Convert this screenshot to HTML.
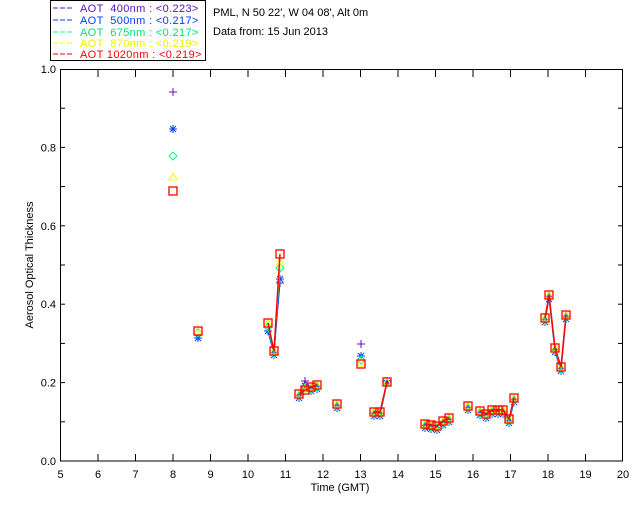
<!DOCTYPE html>
<html><head><meta charset="utf-8"><style>
html,body{margin:0;padding:0;background:#fff;width:640px;height:512px;overflow:hidden}
svg{display:block}
text{font-family:"Liberation Sans",sans-serif;font-size:11px}
</style></head><body>
<svg id="s" width="640" height="512" viewBox="0 0 640 512" xmlns="http://www.w3.org/2000/svg">
<rect x="50.5" y="0.5" width="155" height="60" fill="none" stroke="#000"/>
<g font-size="11" letter-spacing="0.35">
<line x1="53" y1="8" x2="73" y2="8" stroke="#6010c0" stroke-dasharray="5,2"/><text x="80" y="12" fill="#6010c0" xml:space="preserve">AOT  400nm : &lt;0.223&gt;</text>
<line x1="53" y1="20" x2="73" y2="20" stroke="#0040ff" stroke-dasharray="5,2"/><text x="80" y="24" fill="#0040ff" xml:space="preserve">AOT  500nm : &lt;0.217&gt;</text>
<line x1="53" y1="32" x2="73" y2="32" stroke="#00ff80" stroke-dasharray="5,2"/><text x="80" y="36" fill="#00e070" xml:space="preserve">AOT  675nm : &lt;0.217&gt;</text>
<line x1="53" y1="43" x2="73" y2="43" stroke="#ffff00" stroke-dasharray="5,2"/><text x="80" y="47" fill="#f0f000" xml:space="preserve">AOT  870nm : &lt;0.219&gt;</text>
<line x1="53" y1="54" x2="73" y2="54" stroke="#ff0000" stroke-dasharray="5,2"/><text x="80" y="58" fill="#ff0000" xml:space="preserve">AOT 1020nm : &lt;0.219&gt;</text>
</g>
<text x="213" y="16" fill="#000">PML, N 50 22', W 04 08', Alt 0m</text>
<text x="213" y="35" fill="#000">Data from: 15 Jun 2013</text>
<rect x="60.5" y="69.5" width="562" height="391.5" fill="none" stroke="#000"/>
<g id="ax"></g>
<text x="340" y="491" text-anchor="middle">Time (GMT)</text>
<text transform="translate(33,265) rotate(-90)" text-anchor="middle" font-size="10">Aerosol Optical Thickness</text>
<g id="d"></g>
</svg>
<script>
var ns="http://www.w3.org/2000/svg",ax=document.getElementById('ax'),d=document.getElementById('d');
function el(p,t,a,tx){var e=document.createElementNS(ns,t);for(var k in a)e.setAttribute(k,a[k]);if(tx)e.textContent=tx;p.appendChild(e);return e;}
for(var h=5;h<=20;h++){var x=60.5+37.5*(h-5);
 if(h>5&&h<20){el(ax,'line',{x1:x,y1:461,x2:x,y2:454,stroke:'#000'});el(ax,'line',{x1:x,y1:70,x2:x,y2:77,stroke:'#000'});}
 el(ax,'text',{x:x,y:478,'text-anchor':'middle'},''+h);}
for(var i=0;i<=10;i++){var y=461-39.2*i;
 if(i>0&&i<10){el(ax,'line',{x1:61,y1:y,x2:65,y2:y,stroke:'#000'});el(ax,'line',{x1:622,y1:y,x2:618,y2:y,stroke:'#000'});}
 if(i%2==0)el(ax,'text',{x:56,y:y+4,'text-anchor':'end'},(i/10).toFixed(1));}
var G=[[[173,191]],[[198,331]],[[268,323],[274,351],[280,254]],[[299,394],[305,390],[311,387],[317,385]],[[337,404]],[[361,364]],[[374,412],[380,412],[387,382]],[[425,424],[431,425],[437,426],[443,421],[449,418]],[[468,406]],[[480,411],[486,414],[492,410],[498,410],[503,410],[509,419],[514,398]],[[545,318],[549,295],[555,348],[561,367],[566,315]]];
var sp={'173,191':[92,129,156,177],'361,364':[344,356,360,363],'280,254':[283,279,268,262],'268,323':[331,331,327,323],'198,331':[338,338,333,331],'387,382':[381,383,383,382],'305,390':[381,386,388,389]};
var C=['#6010c0','#0040ff','#00ff80','#ffff00','#ff0000'];
var S=[[],[],[],[],[]];
G.forEach(function(g){var ss=[[],[],[],[],[]];g.forEach(function(p){var k=p[0]+','+p[1];var v=sp[k]||[p[1]+1,p[1]+4,p[1]+2,p[1]];for(var j=0;j<4;j++)ss[j].push([p[0],v[j]]);ss[4].push([p[0],p[1]]);});for(var j=0;j<5;j++)S[j].push(ss[j]);});
for(var j=0;j<5;j++){S[j].forEach(function(g){if(g.length>1)el(d,'polyline',{points:g.map(function(p){return p.join(',')}).join(' '),fill:'none',stroke:C[j],'stroke-width':j==4?1.5:1});
 g.forEach(function(p){var x=p[0],y=p[1],c=C[j];
 if(j==0){el(d,'path',{d:'M'+(x-4)+' '+y+'h8M'+x+' '+(y-4)+'v8',stroke:c,fill:'none'});}
 else if(j==1){el(d,'path',{d:'M'+(x-4)+' '+y+'h8M'+x+' '+(y-4)+'v8M'+(x-3)+' '+(y-3)+'l6 6M'+(x+3)+' '+(y-3)+'l-6 6',stroke:c,fill:'none'});}
 else if(j==2){el(d,'path',{d:'M'+x+' '+(y-4)+'l4 4l-4 4l-4-4z',stroke:c,fill:'none'});}
 else if(j==3){el(d,'path',{d:'M'+x+' '+(y-4)+'l4 7h-8z',stroke:c,fill:'none'});}
 else el(d,'rect',{x:x-4,y:y-4,width:8,height:8,stroke:c,fill:'none','stroke-width':1.3});});});}
</script>
</body></html>
